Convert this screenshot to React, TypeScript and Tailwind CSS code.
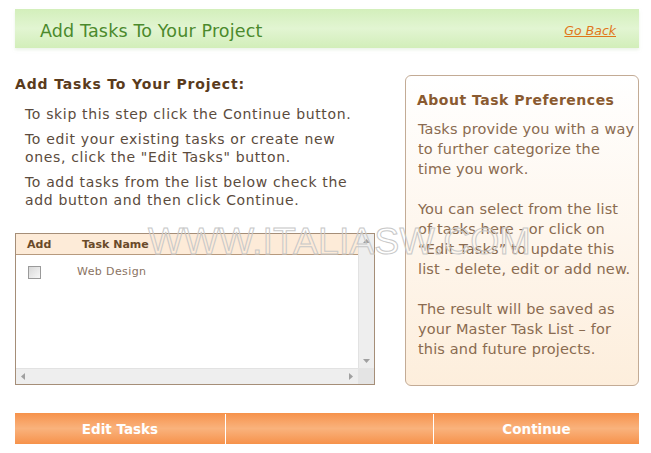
import React from "react";

const verdana = { fontFamily: '"DejaVu Sans", Verdana, sans-serif' };

export default function App() {
  return (
    <div
      className="relative w-[651px] h-[453px] bg-white overflow-hidden font-['DejaVu_Sans',Verdana,sans-serif]"
      style={verdana}
    >
      {/* Header */}
      <div className="ml-[15px] mr-[12px] mt-[9px] h-[39px] flex items-center justify-between pl-[25px] pr-[23px] pt-[5px] bg-gradient-to-b from-[#d3efbb] via-[#e2f5d2] to-[#d2eeb9] shadow-[0_2px_3px_rgba(200,220,190,0.35)]">
        <span className="text-[17.5px] text-[#4b8a2c] tracking-[0.15px]">Add Tasks To Your Project</span>
        <a className="text-[12.5px] italic underline text-[#e0761a] cursor-pointer">Go Back</a>
      </div>

      {/* Main */}
      <div className="flex pl-[15px] pr-[12px] mt-[27px]">
        <div className="w-[360px] flex flex-col">
          <h2 className="text-[14px] leading-[16px] font-bold text-[#5a3b1c] tracking-[0.85px] mt-[1px] whitespace-nowrap">
            Add Tasks To Your Project:
          </h2>
          <div className="pl-[10px] mt-[13px] flex flex-col gap-[7px] text-[14px] leading-[18px] text-[#5b4b3d] tracking-[0.65px] whitespace-nowrap">
            <p>To skip this step click the Continue button.</p>
            <p>
              To edit your existing tasks or create new
              <br />
              ones, click the "Edit Tasks" button.
            </p>
            <p>
              To add tasks from the list below check the
              <br />
              add button and then click Continue.
            </p>
          </div>

          {/* Table */}
          <div className="mt-[24px] h-[152px] border border-[#a58e78] flex flex-col bg-white">
            <div className="flex flex-1 min-h-0">
              <div className="flex-1 flex flex-col">
                <div className="h-[21px] flex items-center bg-[#fdebd8] border-b border-[#b79a7e] text-[11px] font-bold text-[#6a4a2a] pt-[3px]">
                  <span className="pl-[11px] w-[66px]">Add</span>
                  <span>Task Name</span>
                </div>
                <div className="flex items-center h-[30px] pt-[4px]">
                  <span className="ml-[12px] w-[13px] h-[13px] border border-[#9a9a9a] bg-gradient-to-br from-[#d8d8d8] to-[#f8f8f8]" />
                  <span className="ml-[36px] text-[11px] text-[#8a7262] tracking-[0.4px]">Web Design</span>
                </div>
              </div>
              <div className="w-[16px] bg-[#eeeeee] border-l border-[#e2e2e2] flex flex-col justify-between items-center py-[5px]">
                <svg width="7" height="4" viewBox="0 0 7 4"><path d="M0 4 L3.5 0 L7 4Z" fill="#a0a0a0" /></svg>
                <svg width="7" height="4" viewBox="0 0 7 4"><path d="M0 0 L3.5 4 L7 0Z" fill="#a0a0a0" /></svg>
              </div>
            </div>
            <div className="h-[16px] flex">
              <div className="flex-1 bg-[#eeeeee] border-t border-[#e2e2e2] flex items-center justify-between px-[5px]">
                <svg width="4" height="7" viewBox="0 0 4 7"><path d="M4 0 L0 3.5 L4 7Z" fill="#a0a0a0" /></svg>
                <svg width="4" height="7" viewBox="0 0 4 7"><path d="M0 0 L4 3.5 L0 7Z" fill="#a0a0a0" /></svg>
              </div>
              <div className="w-[16px] bg-[#e4e4e4]" />
            </div>
          </div>
        </div>

        {/* Right panel */}
        <div className="ml-auto w-[234px] h-[311px] rounded-[6px] border border-[#c3ab95] bg-gradient-to-b from-white to-[#fdeedc] pl-[11px] pt-[14px] whitespace-nowrap">
          <h3 className="text-[14px] leading-[20px] font-bold text-[#8a5a30] tracking-[0.5px]">About Task Preferences</h3>
          <div className="mt-[9px] pl-[1px] text-[14.5px] leading-[20px] text-[#8a6b50] tracking-[0.15px] flex flex-col gap-[20px]">
            <p>
              Tasks provide you with a way
              <br />
              to further categorize the
              <br />
              time you work.
            </p>
            <p>
              You can select from the list
              <br />
              of tasks here - or click on
              <br />
              “Edit Tasks” to update this
              <br />
              list - delete, edit or add new.
            </p>
            <p>
              The result will be saved as
              <br />
              your Master Task List – for
              <br />
              this and future projects.
            </p>
          </div>
        </div>
      </div>

      {/* Bottom bar */}
      <div className="ml-[15px] mr-[12px] mt-[27px] h-[31px] flex bg-gradient-to-b from-[#f6924a] via-[#f9b27c] to-[#f6924a] text-white font-bold text-[13.5px] pt-[1px]">
        <div className="w-[211px] flex items-center justify-center border-r border-white">Edit Tasks</div>
        <div className="w-[208px] border-r border-white" />
        <div className="flex-1 flex items-center justify-center">Continue</div>
      </div>

      {/* Watermark */}
      <span
        className="absolute left-[148px] top-[221px] text-[37.5px] leading-[40px] text-transparent [-webkit-text-stroke:1px_#c8c8c8] pointer-events-none whitespace-nowrap"
        style={{ fontFamily: '"Liberation Sans", Arial, sans-serif' }}
      >
        WWW.ITALIASW.COM
      </span>
    </div>
  );
}
